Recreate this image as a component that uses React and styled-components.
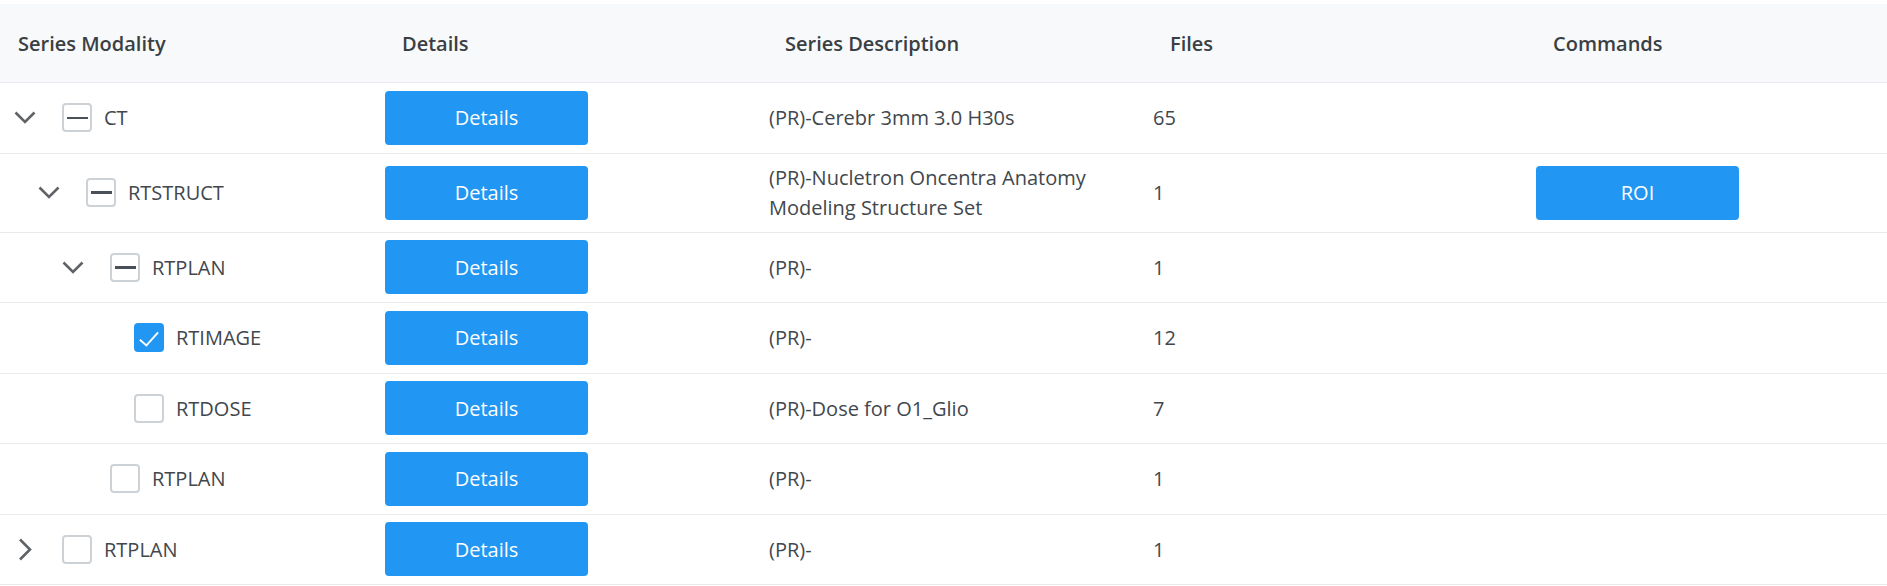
import React from 'react'
import styled, { createGlobalStyle } from 'styled-components'

const GlobalStyle = createGlobalStyle`
  body {
    margin: 0;
    background: #fff;
    font-family: "Open Sans", "Noto Sans", sans-serif;
    color: #42474d;
  }
`

const series = [
  { id: 1, level: 0, toggle: 'down', check: 'partial', modality: 'CT', desc: '(PR)-Cerebr 3mm 3.0 H30s', files: 65 },
  { id: 2, level: 1, toggle: 'down', check: 'partial', modality: 'RTSTRUCT', desc: '(PR)-Nucletron Oncentra Anatomy Modeling Structure Set', files: 1, roi: true },
  { id: 3, level: 2, toggle: 'down', check: 'partial', modality: 'RTPLAN', desc: '(PR)-', files: 1 },
  { id: 4, level: 3, check: 'on', modality: 'RTIMAGE', desc: '(PR)-', files: 12 },
  { id: 5, level: 3, check: 'off', modality: 'RTDOSE', desc: '(PR)-Dose for O1_Glio', files: 7 },
  { id: 6, level: 2, check: 'off', modality: 'RTPLAN', desc: '(PR)-', files: 1 },
  { id: 7, level: 0, toggle: 'right', check: 'off', modality: 'RTPLAN', desc: '(PR)-', files: 1 },
]

const Table = styled.div`
  margin-top: 4px;
  width: 100%;
`

const Row = styled.div`
  display: grid;
  grid-template-columns: 384px 383px 385px 383px 1fr;
  border-bottom: 1px solid #e8eaed;
`

const HeadRow = styled(Row)`
  height: 78px;
  background: #f8f9fa;
`

const HeadCell = styled.div`
  display: flex;
  align-items: center;
  padding-left: 18px;
  font-size: 20px;
  font-weight: 600;
  color: #3a3f44;
`

const Cell = styled.div`
  display: flex;
  align-items: center;
  padding: 7.75px 0 7.75px 1px;
  font-size: 20px;
`

const DescCell = styled(Cell)`
  padding: 9.5px 8px 9.5px 2px;
  line-height: 29.5px;
`

const TreeCell = styled(Cell)`
  padding-left: ${p => 14 + p.level * 24}px;
`

const Toggle = styled.span`
  width: 22px;
  margin-right: 26px;
  display: flex;
  justify-content: center;
  color: #5f6368;
`

const Box = styled.span`
  box-sizing: border-box;
  width: 30px;
  height: 29px;
  border-radius: 4px;
  border: 2px solid ${p => (p.on ? '#2196f3' : '#cdd2d7')};
  background: ${p => (p.on ? '#2196f3' : '#fff')};
  display: flex;
  align-items: center;
  justify-content: center;
  margin-right: 12px;
  flex-shrink: 0;
`

const Dash = styled.span`
  width: 21px;
  height: 2.5px;
  background: #4a5057;
`

const Button = styled.button`
  width: 203px;
  height: 54px;
  border: none;
  border-radius: 4px;
  background: #2196f3;
  color: #fff;
  font-family: inherit;
  font-size: 20px;
  cursor: pointer;
`

const Chevron = ({ dir }) =>
  dir === 'down' ? (
    <svg width="22" height="13" viewBox="0 0 22 13" fill="none">
      <path d="M1.5 1.5 L11 11 L20.5 1.5" stroke="currentColor" strokeWidth="2.6" />
    </svg>
  ) : (
    <svg width="14" height="23" viewBox="0 0 14 23" fill="none">
      <path d="M2 1.5 L12 11.5 L2 21.5" stroke="currentColor" strokeWidth="2.6" />
    </svg>
  )

const Checkbox = ({ state }) => (
  <Box on={state === 'on'}>
    {state === 'partial' && <Dash />}
    {state === 'on' && (
      <svg width="26" height="26" viewBox="0 0 30 29" fill="none">
        <path d="M4.5 16.5 L12 23 L25.5 8" stroke="#fff" strokeWidth="2.2" />
      </svg>
    )}
  </Box>
)

const App = () => (
  <>
    <GlobalStyle />
    <Table>
      <HeadRow>
        <HeadCell>Series Modality</HeadCell>
        <HeadCell>Details</HeadCell>
        <HeadCell>Series Description</HeadCell>
        <HeadCell>Files</HeadCell>
        <HeadCell>Commands</HeadCell>
      </HeadRow>
      {series.map(s => (
        <Row key={s.id}>
          <TreeCell level={s.level}>
            <Toggle>{s.toggle && <Chevron dir={s.toggle} />}</Toggle>
            <Checkbox state={s.check} />
            {s.modality}
          </TreeCell>
          <Cell>
            <Button>Details</Button>
          </Cell>
          <DescCell>{s.desc}</DescCell>
          <Cell>{s.files}</Cell>
          <Cell>{s.roi && <Button>ROI</Button>}</Cell>
        </Row>
      ))}
    </Table>
  </>
)

export default App
